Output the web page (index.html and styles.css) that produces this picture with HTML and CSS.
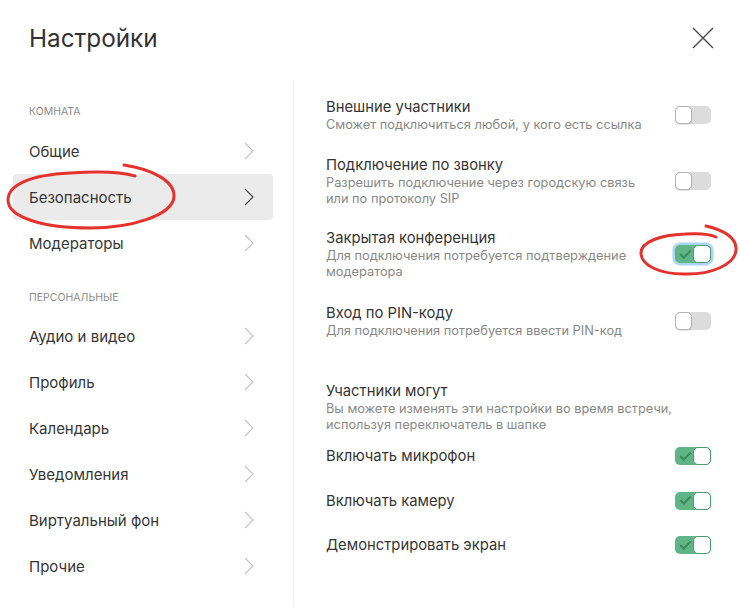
FILE: index.html
```
<!DOCTYPE html>
<html lang="ru">
  <head>
    <meta charset="utf-8">
    <title>Настройки</title>
    <link rel="stylesheet" href="styles.css">
  </head>
  <body>
    <div class="settings">
      <div class="header">
        <h1>Настройки</h1>
        <button class="close" aria-label="Закрыть">
          <svg width="22" height="22" viewBox="0 0 22 22">
            <path d="M1 1 L21 21 M21 1 L1 21" stroke="#4a4a4a" stroke-width="1.4" fill="none"/>
          </svg>
        </button>
      </div>

      <div class="main">
        <div class="sidebar">
          <div class="label">Комната</div>
          <a class="nav-item">Общие <svg class="chev" viewBox="0 0 10 18"><path d="M1 1 L9 9 L1 17"/></svg></a>
          <a class="nav-item active">Безопасность <svg class="chev" viewBox="0 0 10 18"><path d="M1 1 L9 9 L1 17"/></svg></a>
          <a class="nav-item">Модераторы <svg class="chev" viewBox="0 0 10 18"><path d="M1 1 L9 9 L1 17"/></svg></a>

          <div class="label personal">Персональные</div>
          <a class="nav-item">Аудио и видео <svg class="chev" viewBox="0 0 10 18"><path d="M1 1 L9 9 L1 17"/></svg></a>
          <a class="nav-item">Профиль <svg class="chev" viewBox="0 0 10 18"><path d="M1 1 L9 9 L1 17"/></svg></a>
          <a class="nav-item">Календарь <svg class="chev" viewBox="0 0 10 18"><path d="M1 1 L9 9 L1 17"/></svg></a>
          <a class="nav-item">Уведомления <svg class="chev" viewBox="0 0 10 18"><path d="M1 1 L9 9 L1 17"/></svg></a>
          <a class="nav-item">Виртуальный фон <svg class="chev" viewBox="0 0 10 18"><path d="M1 1 L9 9 L1 17"/></svg></a>
          <a class="nav-item">Прочие <svg class="chev" viewBox="0 0 10 18"><path d="M1 1 L9 9 L1 17"/></svg></a>
        </div>

        <div class="content">
          <div class="row">
            <div class="text">
              <div class="title">Внешние участники</div>
              <div class="desc">Сможет подключиться любой, у кого есть ссылка</div>
            </div>
            <span class="toggle"><span class="knob"></span></span>
          </div>

          <div class="row">
            <div class="text">
              <div class="title">Подключение по звонку</div>
              <div class="desc">Разрешить подключение через городскую связь<br>или по протоколу SIP</div>
            </div>
            <span class="toggle"><span class="knob"></span></span>
          </div>

          <div class="row">
            <div class="text">
              <div class="title">Закрытая конференция</div>
              <div class="desc">Для подключения потребуется подтверждение<br>модератора</div>
            </div>
            <span class="toggle on focus"><span class="check"></span><span class="knob"></span></span>
          </div>

          <div class="row">
            <div class="text">
              <div class="title">Вход по PIN-коду</div>
              <div class="desc">Для подключения потребуется ввести PIN-код</div>
            </div>
            <span class="toggle"><span class="knob"></span></span>
          </div>

          <div class="group">
            <div class="title">Участники могут</div>
            <div class="desc">Вы можете изменять эти настройки во время встречи,<br>используя переключатель в шапке</div>
          </div>

          <div class="row small">
            <div class="title">Включать микрофон</div>
            <span class="toggle on"><span class="check"></span><span class="knob"></span></span>
          </div>
          <div class="row small">
            <div class="title">Включать камеру</div>
            <span class="toggle on"><span class="check"></span><span class="knob"></span></span>
          </div>
          <div class="row small">
            <div class="title">Демонстрировать экран</div>
            <span class="toggle on"><span class="check"></span><span class="knob"></span></span>
          </div>
        </div>
      </div>

      <!-- red pen marks drawn over the screenshot -->
      <svg class="marks" width="740" height="607" viewBox="0 0 740 607">
        <path d="M124 165 C150 169 175 180 174 197 C172 216 130 228 90 228 C45 228 8 218 8 200 C8 185 30 175 70 173 C100 171 122 172 135 176"/>
        <path d="M706 226 C724 230 737 238 736 250 C735 265 710 275 684 274 C659 274 641 265 641 253 C641 242 660 235 685 234 C700 233 710 234 716 237"/>
      </svg>
    </div>
  </body>
</html>
```

FILE: styles.css
```
body
{
  margin: 0;
  background-color: white;
  font-family: Inter, "Noto Sans", sans-serif;
  color: #333;
}
.settings
{
  position: relative;
  width: 740px;
  height: 607px;
  overflow: hidden;
}
.header
{
  height: 75px;
  margin-bottom: 5px;
  padding: 0 26px 0 29px;
  display: flex;
  align-items: center;
  justify-content: space-between;
}
.header h1
{
  margin: 0;
  font-size: 24.3px;
  font-weight: 400;
  color: #333;
}
.close
{
  border: none;
  background: none;
  padding: 0;
  display: flex;
}
.main
{
  display: flex;
  height: 527px;
}

/* left menu */
.sidebar
{
  width: 294px;
  box-sizing: border-box;
  padding: 24px 20px 0 13px;
  border-right: 1px solid #ededed;
  flex-shrink: 0;
}
.label
{
  font-size: 10.5px;
  line-height: 16px;
  text-transform: uppercase;
  color: #8c8c8c;
  padding-left: 16px;
  margin-bottom: 8px;
}
.label.personal
{
  margin-top: 24px;
  margin-bottom: 7px;
}
.nav-item
{
  height: 46px;
  padding: 0 19px 0 16px;
  display: flex;
  align-items: center;
  justify-content: space-between;
  font-size: 15px;
  color: #363636;
  border-radius: 4px;
}
.nav-item.active { background-color: #ebebeb; }
.chev
{
  width: 10px;
  height: 18px;
  fill: none;
  stroke: #c2c2c2;
  stroke-width: 1.1;
}
.nav-item.active .chev { stroke: #444; }

/* right side */
.content
{
  flex: 1;
  padding: 15px 29px 0 32px;
}
.row
{
  display: flex;
  align-items: center;
  justify-content: space-between;
  min-height: 39px;
  margin-bottom: 21px;
}
.title
{
  font-size: 14.8px;
  line-height: 20px;
  color: #363636;
}
.desc
{
  font-size: 12.8px;
  line-height: 16px;
  color: #888;
}
.group
{
  margin-top: 41px;
  margin-bottom: 1px;
}
.row.small
{
  min-height: 0;
  height: 44.5px;
  margin-bottom: 0;
}

/* switches */
.toggle
{
  width: 36px;
  height: 18px;
  box-sizing: border-box;
  border-radius: 5px;
  background-color: #dcdcdc;
  display: flex;
  align-items: center;
  justify-content: flex-start;
  flex-shrink: 0;
}
.knob
{
  width: 17px;
  height: 18px;
  box-sizing: border-box;
  background-color: white;
  border: 1px solid #b3b3b3;
  border-radius: 5px;
  box-shadow: 0 1px 1px rgba(0, 0, 0, 0.12);
}
.toggle.on
{
  background-color: #5fb585;
  justify-content: space-between;
}
.toggle.on .knob
{
  width: 18px;
  border-color: #4a9d6e;
  box-shadow: none;
}
.check
{
  width: 9px;
  height: 4px;
  margin: 0 0 3px 5px;
  border-left: 2px solid #3d8a5c;
  border-bottom: 2px solid #3d8a5c;
  transform: rotate(-45deg);
}
.toggle.focus { box-shadow: 0 0 0 2px #a9d5f7, 0 0 0 3px #d3e9fb; }

.marks
{
  position: absolute;
  top: 0;
  left: 0;
  pointer-events: none;
}
.marks path
{
  fill: none;
  stroke: #e5322d;
  stroke-width: 3;
  stroke-linecap: round;
}
```
